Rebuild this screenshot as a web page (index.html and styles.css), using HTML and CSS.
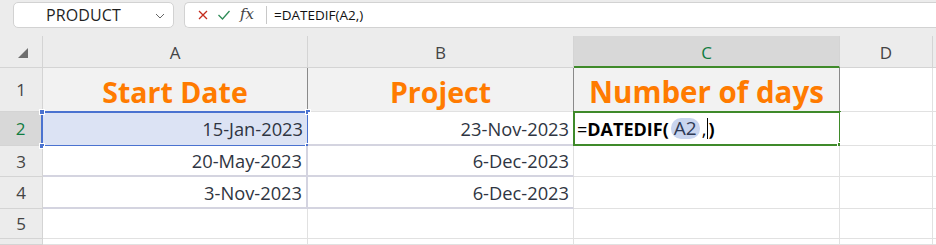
FILE: index.html
```html
<!DOCTYPE html>
<html>
<head>
<meta charset="utf-8">
<link rel="stylesheet" href="styles.css">
</head>
<body>
<div class="app">
  <div class="toolbar">
    <div class="namebox">
      <span class="name">PRODUCT</span>
      <svg class="chev" width="10" height="6" viewBox="0 0 10 6"><path d="M1 1 L5 5 L9 1" fill="none" stroke="#666" stroke-width="1"/></svg>
    </div>
    <div class="fbar">
      <svg class="ico" width="12" height="12" viewBox="0 0 12 12"><path d="M2 2 L10 10 M10 2 L2 10" stroke="#c42b1c" stroke-width="1.3" fill="none"/></svg>
      <svg class="ico" width="14" height="12" viewBox="0 0 14 12"><path d="M1.5 6 L5.5 10 L12.5 2" stroke="#2e8b57" stroke-width="1.3" fill="none"/></svg>
      <span class="fx">fx</span>
      <span class="sep"></span>
      <span class="ftext">=DATEDIF(A2,)</span>
    </div>
  </div>
  <div class="sheet">
    <div class="corner"><span class="tri"></span></div>
    <div class="ch">A</div>
    <div class="ch">B</div>
    <div class="ch ch-active">C</div>
    <div class="ch">D</div>
    <div class="ch ch-rest"></div>

    <div class="rh">1</div>
    <div class="c title bdark">Start Date</div>
    <div class="c title bdark">Project</div>
    <div class="c title bdark wide">Number of days</div>
    <div class="c"></div>
    <div class="c rest"></div>

    <div class="rh rh-active">2</div>
    <div class="c num sel">15-Jan-2023
      <span class="selbox"><i class="h tl"></i><i class="h tr"></i><i class="h bl"></i><i class="h br"></i></span>
    </div>
    <div class="c num lav">23-Nov-2023</div>
    <div class="c active"><span class="formula">=<b>DATEDIF(</b><span class="pill">A2</span>,<span class="caret"></span><b>)</b></span><span class="actbox"><i class="gh"></i></span></div>
    <div class="c"></div>
    <div class="c rest"></div>

    <div class="rh">3</div>
    <div class="c num lav lavr">20-May-2023</div>
    <div class="c num lav">6-Dec-2023</div>
    <div class="c"></div>
    <div class="c"></div>
    <div class="c rest"></div>

    <div class="rh">4</div>
    <div class="c num lav lavr">3-Nov-2023</div>
    <div class="c num lav">6-Dec-2023</div>
    <div class="c"></div>
    <div class="c"></div>
    <div class="c rest"></div>

    <div class="rh">5</div>
    <div class="c"></div>
    <div class="c"></div>
    <div class="c"></div>
    <div class="c"></div>
    <div class="c rest"></div>

    <div class="rh"></div>
    <div class="c"></div>
    <div class="c"></div>
    <div class="c"></div>
    <div class="c"></div>
    <div class="c rest"></div>
  </div>
</div>
</body>
</html>
```

FILE: styles.css
```css
* { box-sizing: border-box; }
html, body { margin: 0; padding: 0; }
body {
  width: 936px;
  height: 245px;
  overflow: hidden;
  background: #ececec;
  font-family: "Open Sans", "Noto Sans", sans-serif;
}
.app { display: flex; flex-direction: column; height: 245px; }
.toolbar {
  height: 36px;
  display: flex;
  align-items: flex-start;
  padding: 2px 0 0 13px;
  gap: 10px;
}
.namebox {
  width: 161px;
  height: 26px;
  background: #fff;
  border: 1px solid #d2d2d2;
  border-radius: 5px;
  display: flex;
  align-items: center;
  padding: 0 8px 0 32px;
}
.name { font-size: 16px; color: #1f1f1f; letter-spacing: 0.1px; flex: 1; }
.chev { margin-top: 1px; }
.fbar {
  flex: 1;
  height: 26px;
  background: #fff;
  border: 1px solid #d2d2d2;
  border-right: none;
  border-radius: 5px 0 0 5px;
  display: flex;
  align-items: center;
  padding-left: 12px;
}
.ico { margin-right: 8px; }
.fx {
  font-family: "DejaVu Serif", "Liberation Serif", serif;
  font-style: italic;
  font-size: 15px;
  color: #444;
  margin-left: 1px;
  margin-bottom: 2px;
}
.sep { width: 1px; height: 18px; background: #c8c8c8; margin: 0 7px 0 12px; }
.ftext { font-size: 13.5px; color: #111; }

.sheet {
  flex: 1;
  display: grid;
  grid-template-columns: 43px 265px 266px 266px 93px 1fr;
  grid-template-rows: 32px 44px 34px 31px 32px 30px 1fr;
}
.corner {
  border-right: 1px solid #d4d4d4;
  border-bottom: 1px solid #d4d4d4;
  position: relative;
}
.tri {
  position: absolute;
  left: 18px;
  top: 12px;
  width: 0; height: 0;
  border-left: 10px solid transparent;
  border-bottom: 10px solid #6e6e6e;
}
.ch {
  display: flex;
  align-items: center;
  justify-content: center;
  font-size: 17px;
  color: #444;
  border-right: 1px solid #d4d4d4;
  border-bottom: 1px solid #d4d4d4;
  padding-top: 2px;
}
.ch-active {
  background: #d8d8d8;
  color: #107c41;
  border-bottom: 2px solid #3f8a2a;
}
.ch-rest { border-right: none; }
.rh {
  display: flex;
  align-items: center;
  justify-content: center;
  font-size: 17px;
  color: #444;
  border-right: 1px solid #d4d4d4;
  border-bottom: 1px solid #d4d4d4;
}
.rh-active {
  background: #d8d8d8;
  color: #107c41;
  border-right: 2px solid #3f8a2a;
}
.c {
  background: #fff;
  border-right: 1px solid #e1e1e1;
  border-bottom: 1px solid #e1e1e1;
  position: relative;
  display: flex;
  align-items: center;
  color: #2f3542;
}
.rest { border-right: none; }
.title {
  background: #f2f2f2;
  justify-content: center;
  font-weight: 700;
  font-size: 28.5px;
  color: #ff7b00;
  padding-top: 4px;
}
.title.wide { font-size: 29.5px; }
.bdark { border-right: 1px solid #8a8a8a; }
.num {
  justify-content: flex-end;
  font-size: 18.3px;
  padding-right: 4px;
}
.sel { background: #dce3f4; }
.lav { border-bottom: 2px solid #d4d4e0; }
.lavr { border-right: 2px solid #d4d4e0; }
.selbox {
  position: absolute;
  left: -2px; top: -1px; right: -2px; bottom: -2px;
  border: 2px solid #4a72d0;
}
.h {
  position: absolute;
  width: 6px; height: 6px;
  background: #4a72d0;
  border: 1px solid #fff;
}
.tl { left: -4px; top: -4px; }
.tr { right: -4px; top: -4px; }
.bl { left: -4px; bottom: -4px; }
.br { right: -4px; bottom: -4px; }
.active { padding-left: 3px; }
.formula { font-size: 18px; color: #000; display: flex; align-items: center; }
.formula b { font-weight: 700; }
.pill {
  background: #c9d5ef;
  color: #2f3a55;
  border-radius: 10px;
  padding: 0 3px 0 3px;
  margin: 0 2px 0 2px;
  line-height: 21px;
  font-size: 19px;
}
.caret {
  display: inline-block;
  width: 1px;
  height: 21px;
  background: #000;
  margin: 0 0 0 1px;
}
.actbox {
  position: absolute;
  left: -1px; top: -1px; right: -2px; bottom: -1px;
  border: 2px solid #3f8a2a;
}
.gh {
  position: absolute;
  right: -4px; bottom: -4px;
  width: 6px; height: 6px;
  background: #3f8a2a;
  border: 1px solid #fff;
}
```
